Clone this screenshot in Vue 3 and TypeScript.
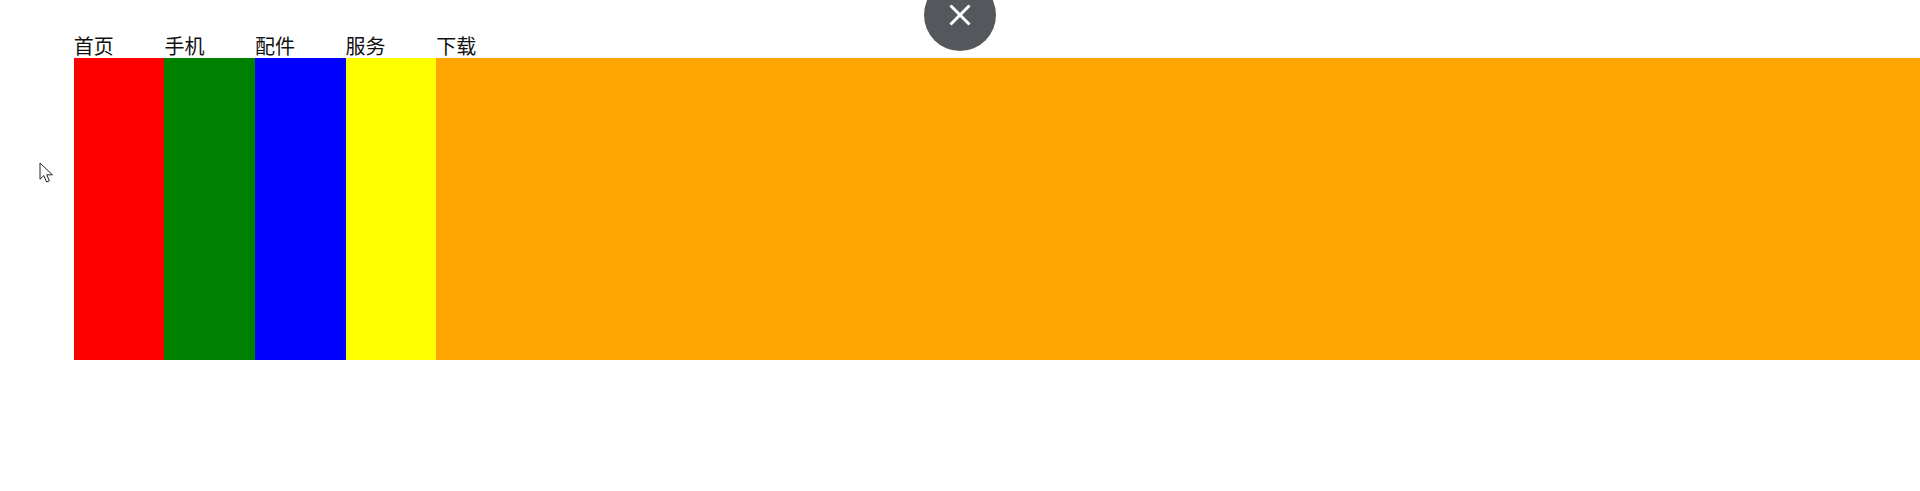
<script setup lang="ts">
interface Tab {
  label: string
  color: string
}

const tabs: Tab[] = [
  { label: '首页', color: 'red' },
  { label: '手机', color: 'green' },
  { label: '配件', color: 'blue' },
  { label: '服务', color: 'yellow' },
  { label: '下载', color: 'orange' }
]
</script>

<template>
  <div class="page">
    <!-- Close button -->
    <button class="close-btn" title="Close">
      <svg width="22" height="22" viewBox="0 0 22 22" fill="none" stroke="#fff" stroke-width="3">
        <line x1="1.5" y1="1.5" x2="20.5" y2="20.5"></line>
        <line x1="20.5" y1="1.5" x2="1.5" y2="20.5"></line>
      </svg>
    </button>

    <!-- Mouse pointer -->
    <svg class="pointer" width="15" height="21" viewBox="0 0 15 21" fill="#fff" stroke="#222" stroke-width="1">
      <path d="M1 1V17.2L4.8 13.6L7.6 20L10.4 18.8L7.7 12.8H13.4Z"></path>
    </svg>

    <div class="tabs">
      <span v-for="tab in tabs" :key="tab.label" class="tab-label">{{ tab.label }}</span>
      <div v-for="tab in tabs" :key="tab.color" class="tab-panel" :style="{ background: tab.color }"></div>
    </div>
  </div>
</template>

<style>
html,
body {
  margin: 0;
  background: #fff;
  overflow: hidden;
}
</style>

<style scoped>
.page {
  position: relative;
  height: 491px;
  padding: 36px 0 0 73.8px;
  box-sizing: border-box;
  font-family: "Liberation Sans", "Noto Sans CJK SC", sans-serif;
}

.tabs {
  display: grid;
  grid-template-columns: repeat(4, 90.6px) 1fr;
  grid-template-rows: 22px 302px;
}

.tab-label {
  font-size: 20px;
  line-height: 23px;
  color: #111;
}

.close-btn {
  position: absolute;
  top: -21px;
  left: 924px;
  width: 72px;
  height: 72px;
  padding: 0;
  border: none;
  border-radius: 50%;
  background: #54575c;
  display: flex;
  align-items: center;
  justify-content: center;
}

.pointer {
  position: absolute;
  top: 162px;
  left: 38.5px;
}
</style>
